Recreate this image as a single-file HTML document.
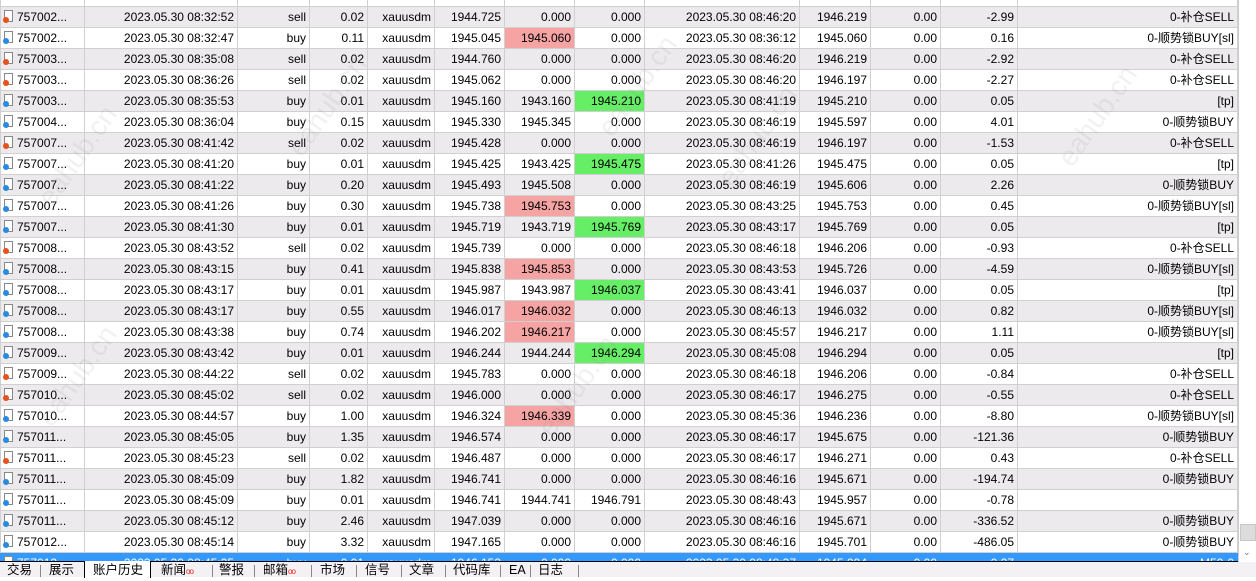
<!DOCTYPE html>
<html><head><meta charset="utf-8"><style>
*{margin:0;padding:0;box-sizing:border-box}
body{width:1256px;height:577px;overflow:hidden;background:#fff;font-family:"Liberation Sans","Noto Sans CJK SC",sans-serif;font-size:12px;color:#000;position:relative}
#grid{position:absolute;left:0;top:0;width:1238px;height:562px;overflow:hidden}
table{position:absolute;left:0;top:-15px;border-collapse:collapse;table-layout:fixed;width:1237px}
td{height:21px;border:1px solid #d0d0d0;text-align:right;padding:0 3px;white-space:nowrap;overflow:hidden;line-height:19px}
tr:nth-child(even) td{background:#edeaee}
tr.h td{height:21px;background:#fff}
td.f{text-align:left;padding-left:16px;position:relative}
td.f i{position:absolute;left:3px;top:3px;width:9px;height:12px;border:1px solid #888;background:#fff}
td.f b{position:absolute;left:2px;top:10px;width:6px;height:6px;border-radius:50%}
.s b{background:#e8501c}.u b{background:#2a8ae0}
td.r{background:#f5a3a3!important}
td.g{background:#66ee66!important}
tr.sel td{background:#3399ff!important;color:#fff;border-color:#3399ff}
#blk{position:absolute;left:0;top:561px;width:1238px;height:1px;background:#000}
#sb{position:absolute;left:1238px;top:0;width:18px;height:562px;background:#fff;border-left:1px solid #ccc}
#thumb{position:absolute;left:1px;top:524px;width:16px;height:17px;background:#dcdcdc;border:1px solid #c8c8c8}
#arr{position:absolute;left:4px;top:547px;font-size:9px;color:#777}
#tabs{position:absolute;left:0;top:562px;width:1256px;height:15px;background:#f4f1f4;font-size:12.5px;line-height:18px}
#tabs span{position:absolute;top:-1px}
.sep{position:absolute;top:3px;width:1px;height:12px;background:#888}
#act{position:absolute;left:84px;top:-1px;width:67px;height:17px;background:#fff;border-left:1px solid #000;border-right:1px solid #000}
.dot{color:#e02020;font-size:8px;letter-spacing:-1px}
.wm{position:absolute;color:rgba(150,150,150,.13);font-size:28px;transform:rotate(-55deg);white-space:nowrap;pointer-events:none}
</style></head><body>
<div id="grid"><table>
<colgroup><col style="width:84px"><col style="width:153px"><col style="width:72px"><col style="width:58px"><col style="width:67px"><col style="width:70px"><col style="width:70px"><col style="width:70px"><col style="width:155px"><col style="width:71px"><col style="width:70px"><col style="width:77px"><col style="width:220px"></colgroup>
<tr class="h"><td></td><td></td><td></td><td></td><td></td><td></td><td></td><td></td><td></td><td></td><td></td><td></td><td></td></tr>
<tr><td class="f s"><i></i><b></b>757002...</td><td>2023.05.30 08:32:52</td><td>sell</td><td>0.02</td><td>xauusdm</td><td>1944.725</td><td>0.000</td><td>0.000</td><td>2023.05.30 08:46:20</td><td>1946.219</td><td>0.00</td><td>-2.99</td><td>0-补仓SELL</td></tr>
<tr><td class="f u"><i></i><b></b>757002...</td><td>2023.05.30 08:32:47</td><td>buy</td><td>0.11</td><td>xauusdm</td><td>1945.045</td><td class="r">1945.060</td><td>0.000</td><td>2023.05.30 08:36:12</td><td>1945.060</td><td>0.00</td><td>0.16</td><td>0-顺势锁BUY[sl]</td></tr>
<tr><td class="f s"><i></i><b></b>757003...</td><td>2023.05.30 08:35:08</td><td>sell</td><td>0.02</td><td>xauusdm</td><td>1944.760</td><td>0.000</td><td>0.000</td><td>2023.05.30 08:46:20</td><td>1946.219</td><td>0.00</td><td>-2.92</td><td>0-补仓SELL</td></tr>
<tr><td class="f s"><i></i><b></b>757003...</td><td>2023.05.30 08:36:26</td><td>sell</td><td>0.02</td><td>xauusdm</td><td>1945.062</td><td>0.000</td><td>0.000</td><td>2023.05.30 08:46:20</td><td>1946.197</td><td>0.00</td><td>-2.27</td><td>0-补仓SELL</td></tr>
<tr><td class="f u"><i></i><b></b>757003...</td><td>2023.05.30 08:35:53</td><td>buy</td><td>0.01</td><td>xauusdm</td><td>1945.160</td><td>1943.160</td><td class="g">1945.210</td><td>2023.05.30 08:41:19</td><td>1945.210</td><td>0.00</td><td>0.05</td><td>[tp]</td></tr>
<tr><td class="f u"><i></i><b></b>757004...</td><td>2023.05.30 08:36:04</td><td>buy</td><td>0.15</td><td>xauusdm</td><td>1945.330</td><td>1945.345</td><td>0.000</td><td>2023.05.30 08:46:19</td><td>1945.597</td><td>0.00</td><td>4.01</td><td>0-顺势锁BUY</td></tr>
<tr><td class="f s"><i></i><b></b>757007...</td><td>2023.05.30 08:41:42</td><td>sell</td><td>0.02</td><td>xauusdm</td><td>1945.428</td><td>0.000</td><td>0.000</td><td>2023.05.30 08:46:19</td><td>1946.197</td><td>0.00</td><td>-1.53</td><td>0-补仓SELL</td></tr>
<tr><td class="f u"><i></i><b></b>757007...</td><td>2023.05.30 08:41:20</td><td>buy</td><td>0.01</td><td>xauusdm</td><td>1945.425</td><td>1943.425</td><td class="g">1945.475</td><td>2023.05.30 08:41:26</td><td>1945.475</td><td>0.00</td><td>0.05</td><td>[tp]</td></tr>
<tr><td class="f u"><i></i><b></b>757007...</td><td>2023.05.30 08:41:22</td><td>buy</td><td>0.20</td><td>xauusdm</td><td>1945.493</td><td>1945.508</td><td>0.000</td><td>2023.05.30 08:46:19</td><td>1945.606</td><td>0.00</td><td>2.26</td><td>0-顺势锁BUY</td></tr>
<tr><td class="f u"><i></i><b></b>757007...</td><td>2023.05.30 08:41:26</td><td>buy</td><td>0.30</td><td>xauusdm</td><td>1945.738</td><td class="r">1945.753</td><td>0.000</td><td>2023.05.30 08:43:25</td><td>1945.753</td><td>0.00</td><td>0.45</td><td>0-顺势锁BUY[sl]</td></tr>
<tr><td class="f u"><i></i><b></b>757007...</td><td>2023.05.30 08:41:30</td><td>buy</td><td>0.01</td><td>xauusdm</td><td>1945.719</td><td>1943.719</td><td class="g">1945.769</td><td>2023.05.30 08:43:17</td><td>1945.769</td><td>0.00</td><td>0.05</td><td>[tp]</td></tr>
<tr><td class="f s"><i></i><b></b>757008...</td><td>2023.05.30 08:43:52</td><td>sell</td><td>0.02</td><td>xauusdm</td><td>1945.739</td><td>0.000</td><td>0.000</td><td>2023.05.30 08:46:18</td><td>1946.206</td><td>0.00</td><td>-0.93</td><td>0-补仓SELL</td></tr>
<tr><td class="f u"><i></i><b></b>757008...</td><td>2023.05.30 08:43:15</td><td>buy</td><td>0.41</td><td>xauusdm</td><td>1945.838</td><td class="r">1945.853</td><td>0.000</td><td>2023.05.30 08:43:53</td><td>1945.726</td><td>0.00</td><td>-4.59</td><td>0-顺势锁BUY[sl]</td></tr>
<tr><td class="f u"><i></i><b></b>757008...</td><td>2023.05.30 08:43:17</td><td>buy</td><td>0.01</td><td>xauusdm</td><td>1945.987</td><td>1943.987</td><td class="g">1946.037</td><td>2023.05.30 08:43:41</td><td>1946.037</td><td>0.00</td><td>0.05</td><td>[tp]</td></tr>
<tr><td class="f u"><i></i><b></b>757008...</td><td>2023.05.30 08:43:17</td><td>buy</td><td>0.55</td><td>xauusdm</td><td>1946.017</td><td class="r">1946.032</td><td>0.000</td><td>2023.05.30 08:46:13</td><td>1946.032</td><td>0.00</td><td>0.82</td><td>0-顺势锁BUY[sl]</td></tr>
<tr><td class="f u"><i></i><b></b>757008...</td><td>2023.05.30 08:43:38</td><td>buy</td><td>0.74</td><td>xauusdm</td><td>1946.202</td><td class="r">1946.217</td><td>0.000</td><td>2023.05.30 08:45:57</td><td>1946.217</td><td>0.00</td><td>1.11</td><td>0-顺势锁BUY[sl]</td></tr>
<tr><td class="f u"><i></i><b></b>757009...</td><td>2023.05.30 08:43:42</td><td>buy</td><td>0.01</td><td>xauusdm</td><td>1946.244</td><td>1944.244</td><td class="g">1946.294</td><td>2023.05.30 08:45:08</td><td>1946.294</td><td>0.00</td><td>0.05</td><td>[tp]</td></tr>
<tr><td class="f s"><i></i><b></b>757009...</td><td>2023.05.30 08:44:22</td><td>sell</td><td>0.02</td><td>xauusdm</td><td>1945.783</td><td>0.000</td><td>0.000</td><td>2023.05.30 08:46:18</td><td>1946.206</td><td>0.00</td><td>-0.84</td><td>0-补仓SELL</td></tr>
<tr><td class="f s"><i></i><b></b>757010...</td><td>2023.05.30 08:45:02</td><td>sell</td><td>0.02</td><td>xauusdm</td><td>1946.000</td><td>0.000</td><td>0.000</td><td>2023.05.30 08:46:17</td><td>1946.275</td><td>0.00</td><td>-0.55</td><td>0-补仓SELL</td></tr>
<tr><td class="f u"><i></i><b></b>757010...</td><td>2023.05.30 08:44:57</td><td>buy</td><td>1.00</td><td>xauusdm</td><td>1946.324</td><td class="r">1946.339</td><td>0.000</td><td>2023.05.30 08:45:36</td><td>1946.236</td><td>0.00</td><td>-8.80</td><td>0-顺势锁BUY[sl]</td></tr>
<tr><td class="f u"><i></i><b></b>757011...</td><td>2023.05.30 08:45:05</td><td>buy</td><td>1.35</td><td>xauusdm</td><td>1946.574</td><td>0.000</td><td>0.000</td><td>2023.05.30 08:46:17</td><td>1945.675</td><td>0.00</td><td>-121.36</td><td>0-顺势锁BUY</td></tr>
<tr><td class="f s"><i></i><b></b>757011...</td><td>2023.05.30 08:45:23</td><td>sell</td><td>0.02</td><td>xauusdm</td><td>1946.487</td><td>0.000</td><td>0.000</td><td>2023.05.30 08:46:17</td><td>1946.271</td><td>0.00</td><td>0.43</td><td>0-补仓SELL</td></tr>
<tr><td class="f u"><i></i><b></b>757011...</td><td>2023.05.30 08:45:09</td><td>buy</td><td>1.82</td><td>xauusdm</td><td>1946.741</td><td>0.000</td><td>0.000</td><td>2023.05.30 08:46:16</td><td>1945.671</td><td>0.00</td><td>-194.74</td><td>0-顺势锁BUY</td></tr>
<tr><td class="f u"><i></i><b></b>757011...</td><td>2023.05.30 08:45:09</td><td>buy</td><td>0.01</td><td>xauusdm</td><td>1946.741</td><td>1944.741</td><td>1946.791</td><td>2023.05.30 08:48:43</td><td>1945.957</td><td>0.00</td><td>-0.78</td><td></td></tr>
<tr><td class="f u"><i></i><b></b>757011...</td><td>2023.05.30 08:45:12</td><td>buy</td><td>2.46</td><td>xauusdm</td><td>1947.039</td><td>0.000</td><td>0.000</td><td>2023.05.30 08:46:16</td><td>1945.671</td><td>0.00</td><td>-336.52</td><td>0-顺势锁BUY</td></tr>
<tr><td class="f u"><i></i><b></b>757012...</td><td>2023.05.30 08:45:14</td><td>buy</td><td>3.32</td><td>xauusdm</td><td>1947.165</td><td>0.000</td><td>0.000</td><td>2023.05.30 08:46:16</td><td>1945.701</td><td>0.00</td><td>-486.05</td><td>0-顺势锁BUY</td></tr>
<tr class="sel"><td class="f u"><i></i><b></b>757012...</td><td>2023.05.30 08:45:25</td><td>buy</td><td>0.01</td><td>xauusdm</td><td>1946.153</td><td>0.000</td><td>0.000</td><td>2023.05.30 08:48:37</td><td>1945.994</td><td>0.00</td><td>-0.27</td><td>M50-0</td></tr>
</table>
<div class="wm" style="left:20px;top:140px">eahub.cn</div>
<div class="wm" style="left:270px;top:90px">eahub.cn</div>
<div class="wm" style="left:580px;top:70px">eahub.cn</div>
<div class="wm" style="left:1040px;top:100px">eahub.cn</div>
<div class="wm" style="left:20px;top:360px">eahub.cn</div>
<div class="wm" style="left:520px;top:370px">eahub.cn</div>
<div class="wm" style="left:700px;top:120px">eahub.cn</div>
</div>
<div id="blk"></div>
<div id="sb"><div id="thumb"></div><div id="arr">&#8964;</div></div>
<div id="tabs">
<div id="act"></div>
<span style="left:7px">交易</span><div class="sep" style="left:40px"></div>
<span style="left:49px">展示</span>
<span style="left:93px">账户历史</span>
<span style="left:161px">新闻<span class="dot" style="position:static">oo</span></span><div class="sep" style="left:212px"></div>
<span style="left:219px">警报</span><div class="sep" style="left:254px"></div>
<span style="left:263px">邮箱<span class="dot" style="position:static">oo</span></span><div class="sep" style="left:311px"></div>
<span style="left:320px">市场</span><div class="sep" style="left:356px"></div>
<span style="left:365px">信号</span><div class="sep" style="left:401px"></div>
<span style="left:409px">文章</span><div class="sep" style="left:445px"></div>
<span style="left:453px">代码库</span><div class="sep" style="left:500px"></div>
<span style="left:509px">EA</span><div class="sep" style="left:530px"></div>
<span style="left:538px">日志</span><div class="sep" style="left:578px"></div>
</div>
</body></html>
